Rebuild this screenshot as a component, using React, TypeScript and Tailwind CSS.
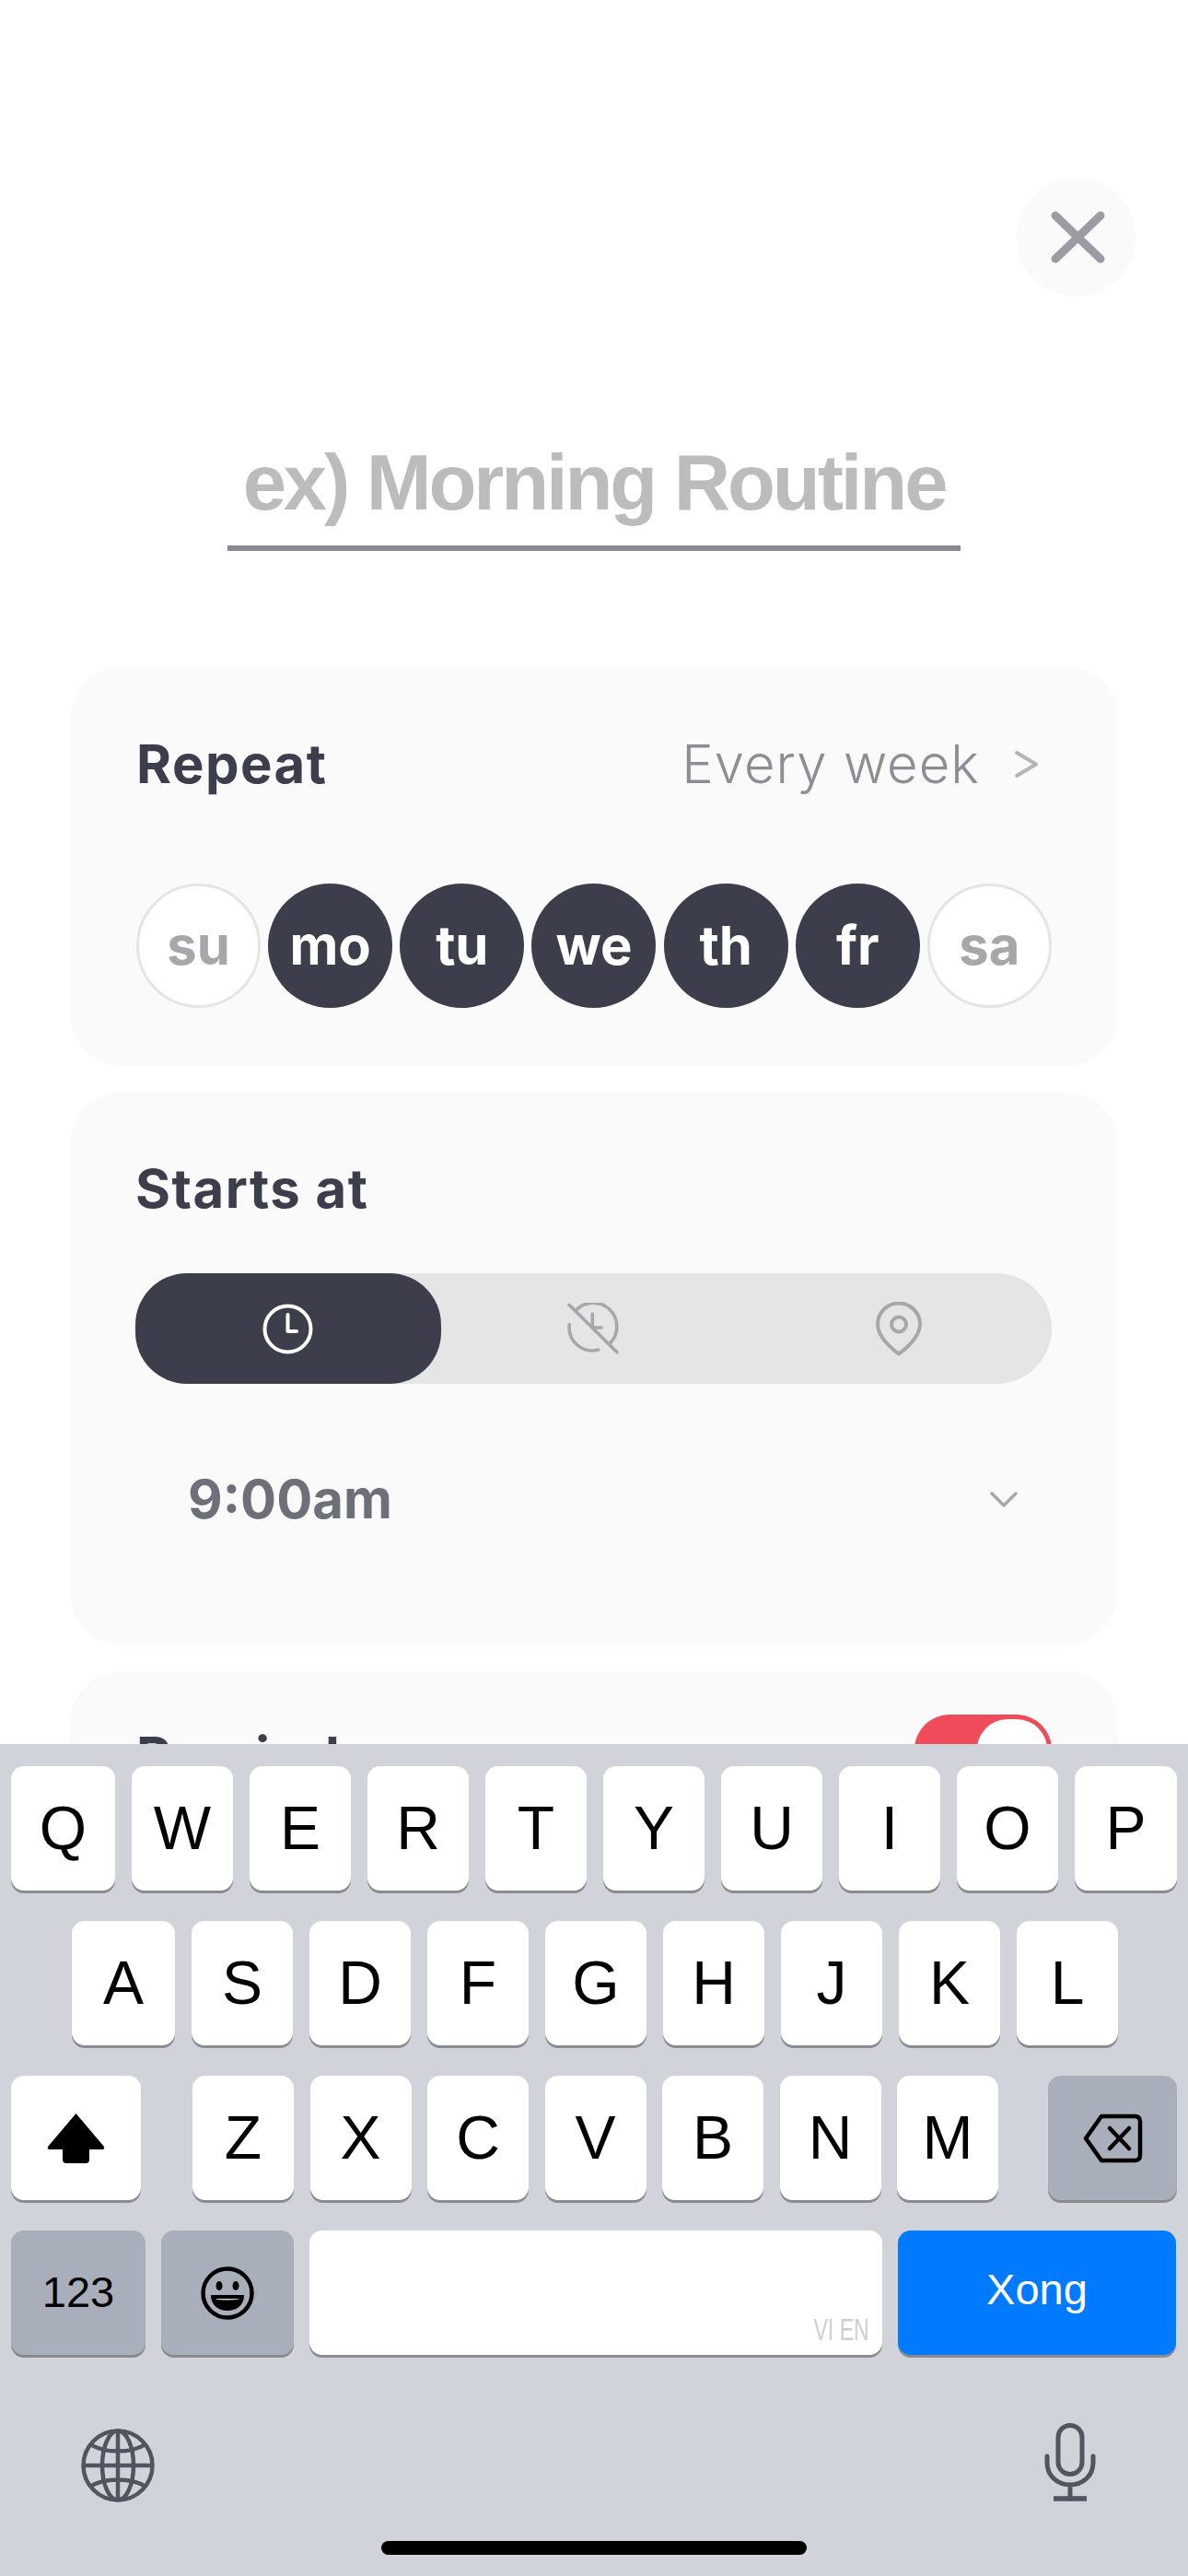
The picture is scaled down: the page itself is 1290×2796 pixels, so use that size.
const days = [
  { label: "su", on: false },
  { label: "mo", on: true },
  { label: "tu", on: true },
  { label: "we", on: true },
  { label: "th", on: true },
  { label: "fr", on: true },
  { label: "sa", on: false },
];

const Key = ({ children, className = "" }: { children?: React.ReactNode; className?: string }) => (
  <div
    className={`relative flex h-[135px] items-center justify-center rounded-[14px] shadow-[0_3px_0_#8a8b90] ${className}`}
  >
    {children}
  </div>
);

const Letter = ({ value, className = "w-[110px]" }: { value: string; className?: string }) => (
  <Key className={`${className} bg-white text-[66px] text-black`}>{value}</Key>
);

const App = () => {
  return (
    <div className="flex h-[2796px] w-[1290px] flex-col overflow-hidden bg-white font-['Inter',sans-serif]">
      <div className="h-[1893px] shrink-0 overflow-hidden">
        <div className="flex justify-end pt-[193px] pr-[57px]">
          <button className="flex h-[129px] w-[129px] items-center justify-center rounded-full bg-[#fafafa] pl-[3px]">
            <svg width="59" height="57" viewBox="0 0 59 57" fill="none" stroke="#9b9ca3" strokeWidth="9" strokeLinecap="round">
              <path d="M5 5 54 52M54 5 5 52" />
            </svg>
          </button>
        </div>

        <div className="mx-auto mt-[152px] w-[796px] border-b-[6px] border-[#8a8c94] pb-[18px] text-center font-['Liberation_Sans',sans-serif] text-[85px] leading-[100px] font-bold tracking-[-3.1px] text-[#bcbcbc]">
          ex) Morning Routine
        </div>

        <div className="mx-[76px] mt-[125px] flex flex-col gap-[29px]">
          <section className="h-[434px] rounded-[56px] bg-[#fafafa] px-[72px] pt-[76px]">
            <div className="flex items-center justify-between">
              <h2 className="text-[58px] leading-[60px] font-bold tracking-[1.5px] text-[#3c3e4b]">Repeat</h2>
              <div className="flex items-center gap-[37px] pr-[14px]">
                <span className="text-[58px] leading-[60px] font-light tracking-[1px] text-[#8d8e95]">Every week</span>
                <svg width="27" height="31" viewBox="0 0 27 31" fill="none" stroke="#b4b5ba" strokeWidth="4" strokeLinecap="round" strokeLinejoin="round">
                  <path d="M3 3 24 15.5 3 28" />
                </svg>
              </div>
            </div>
            <div className="mt-[100px] flex justify-between">
              {days.map((day) => (
                <div
                  key={day.label}
                  className={
                    day.on
                      ? "flex h-[135px] w-[135px] items-center justify-center rounded-full bg-[#3c3e4b] text-[58px] font-bold text-white"
                      : "flex h-[135px] w-[135px] items-center justify-center rounded-full border-[3px] border-[#e5e5e5] bg-white text-[58px] font-bold text-[#a6a7ab]"
                  }
                >
                  {day.label}
                </div>
              ))}
            </div>
          </section>

          <section className="h-[599px] rounded-[56px] bg-[#fafafa] pt-[74px] pr-[72px] pl-[71px]">
            <h2 className="text-[58px] leading-[60px] font-bold tracking-[1.5px] text-[#3c3e4b]">Starts at</h2>
            <div className="mt-[62px] grid h-[120px] grid-cols-3 rounded-[60px] bg-[#e5e5e5]">
              <div className="flex items-center justify-center rounded-[56px] bg-[#3c3e4b]">
                <svg width="55" height="55" viewBox="0 0 55 55" fill="none" stroke="#fff" strokeWidth="4" strokeLinecap="round" strokeLinejoin="round">
                  <circle cx="27.5" cy="27.5" r="25" />
                  <path d="M27.5 12V30H37" />
                </svg>
              </div>
              <div className="flex items-center justify-center">
                <svg width="56" height="56" viewBox="0 0 56 56" fill="none" stroke="#a6a7ab" strokeWidth="3.6" strokeLinecap="round">
                  <path d="M2.3 23.7A25 25 0 0 0 33.7 51M9.3 8.3A25 25 0 0 1 47 43.3M2 2.3 54 53.7M27.3 12V27H37" />
                </svg>
              </div>
              <div className="flex items-center justify-center">
                <svg width="50" height="59" viewBox="0 0 50 59" fill="none" stroke="#a6a7ab" strokeWidth="4" strokeLinejoin="round">
                  <path d="M25 56.5C25 56.5 2 41 2 24.5A23 23 0 0 1 48 24.5C48 41 25 56.5 25 56.5Z" />
                  <circle cx="25" cy="24.5" r="8" />
                </svg>
              </div>
            </div>
            <div className="mt-[95px] flex items-center justify-between pr-[37px] pl-[57px]">
              <span className="text-[58px] leading-[60px] font-bold text-[#6e7079]">9:00am</span>
              <svg width="30" height="17" viewBox="0 0 30 17" fill="none" stroke="#a6a7ab" strokeWidth="3.5" strokeLinecap="round" strokeLinejoin="round">
                <path d="M2 2 15 15 28 2" />
              </svg>
            </div>
          </section>

          <section className="h-[300px] rounded-[56px] bg-[#fafafa] px-[72px] pt-[47px]">
            <div className="flex items-start justify-between">
              <h2 className="mt-[15px] text-[58px] leading-[60px] font-bold tracking-[1.5px] text-[#3c3e4b]">Reminder</h2>
              <div className="flex h-[76px] w-[149px] items-center justify-end rounded-full bg-[#ef4b5a] pr-[5px]">
                <div className="h-[66px] w-[76px] rounded-full bg-white" />
              </div>
            </div>
          </section>
        </div>
      </div>

      <div className="flex flex-1 flex-col bg-[#d1d3db] font-['Liberation_Sans',sans-serif]">
        <div className="mt-[24px] flex justify-between px-[12px]">
          {"QWERTYUIOP".split("").map((k) => (
            <Letter key={k} value={k} className={k === "Q" ? "w-[113px]" : k === "P" ? "w-[111px]" : "w-[110px]"} />
          ))}
        </div>
        <div className="mt-[33px] flex justify-between pr-[76px] pl-[78px]">
          {"ASDFGHJKL".split("").map((k) => (
            <Letter key={k} value={k} className={k === "A" ? "w-[112px]" : "w-[110px]"} />
          ))}
        </div>
        <div className="mt-[33px] flex px-[12px]">
          <Key className="w-[141px] bg-white">
            <svg width="63" height="54" viewBox="0 0 63 54" fill="#000">
              <path d="M31.5 0 62 36Q63 39 60 39H46V50Q46 54 42 54H21Q17 54 17 50V39H3Q0 39 1 36Z" />
            </svg>
          </Key>
          <div className="ml-[56px] flex gap-[17.5px]">
            {"ZXCVBNM".split("").map((k) => (
              <Letter key={k} value={k} />
            ))}
          </div>
          <Key className="ml-auto w-[140px] bg-[#a9afba]">
            <svg width="65" height="54" viewBox="0 0 65 54" fill="none" stroke="#000" strokeWidth="4.5" strokeLinejoin="round" strokeLinecap="round">
              <path d="M20 3H56Q62 3 62 9V45Q62 51 56 51H20L3 27Z" />
              <path d="M29 16 50 38M50 16 29 38" />
            </svg>
          </Key>
        </div>
        <div className="mt-[33px] flex gap-[17px] px-[12px]">
          <Key className="w-[146px] bg-[#a9afba] text-[47px] text-black">123</Key>
          <Key className="w-[144px] bg-[#a9afba]">
            <svg width="58" height="58" viewBox="0 0 58 58" fill="none" stroke="#000" strokeWidth="4.5">
              <circle cx="29" cy="29" r="26.5" />
              <ellipse cx="20" cy="21" rx="3.5" ry="5" fill="#000" stroke="none" />
              <ellipse cx="38" cy="21" rx="3.5" ry="5" fill="#000" stroke="none" />
              <path d="M11 31H47C47 42 39 48 29 48S11 42 11 31Z" fill="#000" stroke="none" />
              <path d="M16 35H42C41 37 17 37 16 35Z" fill="#d1d3db" stroke="none" />
            </svg>
          </Key>
          <Key className="w-[622px] bg-white">
            <span className="absolute right-[14px] bottom-[11px] origin-right scale-x-[0.68] text-[34px] leading-[34px] whitespace-nowrap text-[#cfcfcf]">
              VI EN
            </span>
          </Key>
          <Key className="w-[302px] bg-[#007aff] pb-[6px] text-[47px] text-white">Xong</Key>
        </div>
        <div className="mt-[74px] flex items-start justify-between pr-[100px] pl-[88px]">
          <svg className="mt-[6px]" width="80" height="80" viewBox="0 0 80 80" fill="none" stroke="#50555f" strokeWidth="4.5">
            <circle cx="40" cy="40" r="37.5" />
            <ellipse cx="40" cy="40" rx="17" ry="37.5" />
            <path d="M40 2.5V77.5M2.5 40H77.5M10 17C25 27 55 27 70 17M10 63C25 53 55 53 70 63" />
          </svg>
          <svg width="56" height="85" viewBox="0 0 56 85" fill="none" stroke="#50555f" strokeWidth="5" strokeLinecap="round">
            <rect x="15" y="2.5" width="26" height="53" rx="13" />
            <path d="M3 36V43C3 57 14 67 28 67S53 57 53 43V36M28 67V82" />
            <path d="M10 82H46" strokeWidth="5.5" strokeLinecap="butt" />
          </svg>
        </div>
        <div className="mx-auto mt-[42px] h-[15px] w-[462px] rounded-full bg-black" />
      </div>
    </div>
  );
};

export default App;
